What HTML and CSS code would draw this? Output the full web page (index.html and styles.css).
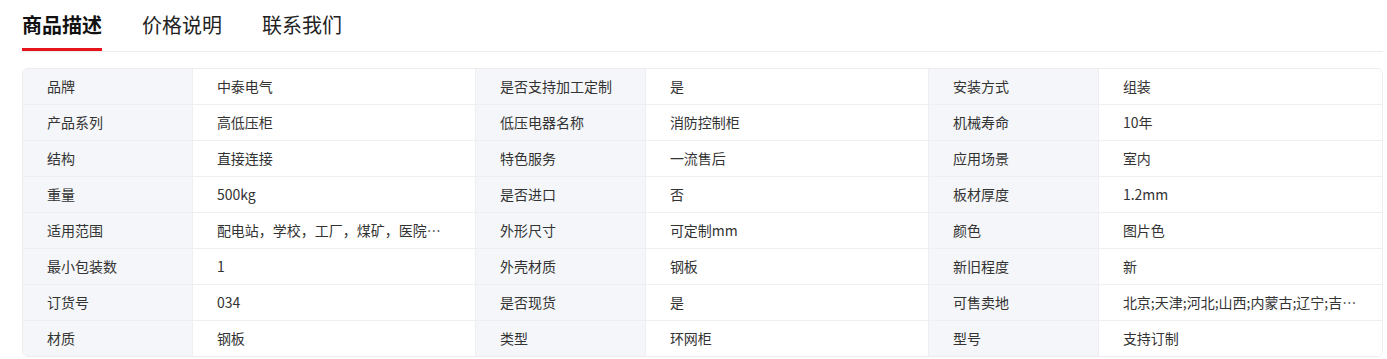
FILE: index.html
```html
<!DOCTYPE html>
<html lang="zh-CN">
<head>
<meta charset="utf-8">
<title>商品描述</title>
<link rel="stylesheet" href="styles.css">
</head>
<body>
<div class="page">
  <div class="tabs">
    <div class="tab active">商品描述</div>
    <div class="tab">价格说明</div>
    <div class="tab">联系我们</div>
  </div>
  <div class="attrs">
    <div class="k">品牌</div><div class="v">中泰电气</div>
    <div class="k">是否支持加工定制</div><div class="v">是</div>
    <div class="k">安装方式</div><div class="v last">组装</div>

    <div class="k">产品系列</div><div class="v">高低压柜</div>
    <div class="k">低压电器名称</div><div class="v">消防控制柜</div>
    <div class="k">机械寿命</div><div class="v last">10年</div>

    <div class="k">结构</div><div class="v">直接连接</div>
    <div class="k">特色服务</div><div class="v">一流售后</div>
    <div class="k">应用场景</div><div class="v last">室内</div>

    <div class="k">重量</div><div class="v">500kg</div>
    <div class="k">是否进口</div><div class="v">否</div>
    <div class="k">板材厚度</div><div class="v last">1.2mm</div>

    <div class="k">适用范围</div><div class="v"><span class="clip">配电站，学校，工厂，煤矿，医院…</span></div>
    <div class="k">外形尺寸</div><div class="v">可定制mm</div>
    <div class="k">颜色</div><div class="v last">图片色</div>

    <div class="k">最小包装数</div><div class="v">1</div>
    <div class="k">外壳材质</div><div class="v">钢板</div>
    <div class="k">新旧程度</div><div class="v last">新</div>

    <div class="k">订货号</div><div class="v">034</div>
    <div class="k">是否现货</div><div class="v">是</div>
    <div class="k">可售卖地</div><div class="v last"><span class="clip">北京;天津;河北;山西;内蒙古;辽宁;吉…</span></div>

    <div class="k lastrow">材质</div><div class="v lastrow">钢板</div>
    <div class="k lastrow">类型</div><div class="v lastrow">环网柜</div>
    <div class="k lastrow">型号</div><div class="v last lastrow">支持订制</div>
  </div>
</div>
</body>
</html>
```

FILE: styles.css
```css
* { box-sizing: border-box; }
html, body { margin: 0; padding: 0; background: #fff; }
body {
  font-family: "Noto Sans CJK SC", "Noto Sans", "Liberation Sans", sans-serif;
  color: #333;
}
.page {
  padding: 0 4px 0 22px;
}
.tabs {
  display: flex;
  gap: 40px;
  border-bottom: 1px solid #ececec;
}
.tab {
  font-size: 20px;
  line-height: 28px;
  padding-top: 11px;
  padding-bottom: 9px;
  border-bottom: 3px solid transparent;
  color: #222;
  white-space: nowrap;
}
.tab.active {
  font-weight: 700;
  color: #111;
  border-bottom-color: #e8141b;
}
.attrs {
  margin-top: 16px;
  display: grid;
  grid-template-columns: 3fr 5fr 3fr 5fr 3fr 5fr;
  border: 1px solid #ececec;
  border-radius: 6px;
  overflow: hidden;
}
.k, .v {
  height: 36px;
  line-height: 34px;
  font-size: 14px;
  padding: 0 24px;
  border-bottom: 1px solid #eeeff2;
  border-right: 1px solid #eeeff2;
  white-space: nowrap;
  overflow: hidden;
}
.k { background: #f5f6f9; color: #333; }
.v { background: #fff; color: #333; }
.v.last { border-right: none; }
.lastrow { border-bottom: none; height: 35px; }
.clip { display: block; overflow: hidden; text-overflow: ellipsis; }
```
